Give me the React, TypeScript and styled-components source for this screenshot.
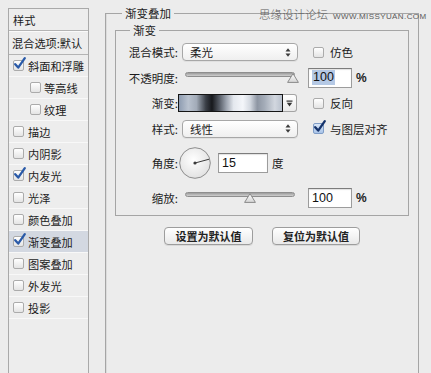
import React from "react";
import styled, { createGlobalStyle } from "styled-components";

const GlobalStyle = createGlobalStyle`
  html, body { margin: 0; padding: 0; background: #ececec; overflow: hidden; }
  body {
    font-family: "Noto Sans CJK SC", "Noto Sans", sans-serif;
    font-size: 11.5px;
    color: #1c1c1c;
  }
  * { box-sizing: border-box; }
`;

const Page = styled.div`
  position: relative;
  display: flex;
  align-items: flex-start;
  padding-left: 8px;
  height: 373px;
  overflow: hidden;
`;

/* ---------- left style list ---------- */
const SidePanel = styled.div`
  flex: none;
  width: 81px;
  height: 400px;
  margin-top: 8px;
  border: 1px solid #a9a9a9;
  background: #ededed;
  display: flex;
  flex-direction: column;
  font-size: 11.2px;
`;

const SideHeader = styled.div`
  height: 22px;
  padding-left: 4px;
  display: flex;
  align-items: center;
  border-bottom: 1px solid #b4b4b4;
`;

const SideDefault = styled.div`
  height: 24px;
  padding-left: 3px;
  display: flex;
  align-items: center;
  border-top: 1px solid #fafafa;
  border-bottom: 1px solid #b4b4b4;
  white-space: nowrap;
`;

const SideItem = styled.div<{ $level: number; $selected?: boolean }>`
  height: 22px;
  display: flex;
  align-items: center;
  gap: ${(p) => (p.$level ? 3 : 4)}px;
  padding-left: ${(p) => (p.$level ? 21 : 4)}px;
  border-bottom: 1px solid #f8f8f8;
  background: ${(p) => (p.$selected ? "#d3d8e1" : "transparent")};
  white-space: nowrap;
`;

/* ---------- checkbox ---------- */
const Box = styled.span<{ $tint?: boolean }>`
  position: relative;
  flex: none;
  display: inline-block;
  width: 11px;
  height: 11px;
  border-radius: 2px;
  border: 1px solid ${(p) => (p.$tint ? "#7f9cc6" : "#ababab")};
  background: ${(p) =>
    p.$tint
      ? "linear-gradient(#d8e5f6, #a9c4e9)"
      : "linear-gradient(#ffffff, #e4e4e4)"};
`;

const Tick = styled.svg`
  position: absolute;
  left: -1px;
  top: -4px;
  width: 13px;
  height: 13px;
  overflow: visible;
`;

function CheckBox({ on, tint, color }: { on?: boolean; tint?: boolean; color?: string }) {
  return (
    <Box $tint={tint}>
      {on && (
        <Tick viewBox="0 0 13 13">
          <path
            d="M2.2 7.2 L5.2 10.6 L11.8 1.2"
            fill="none"
            stroke={color || "#2a5aa8"}
            strokeWidth="2.3"
            strokeLinecap="round"
            strokeLinejoin="round"
          />
        </Tick>
      )}
    </Box>
  );
}

/* ---------- right side ---------- */
const Group = styled.fieldset<{ $mt: number; $h?: number; $w?: number }>`
  margin: ${(p) => p.$mt}px 0 0 0;
  padding: 0;
  min-width: 0;
  border: 1px solid #a5a5a5;
  ${(p) => (p.$h ? `height: ${p.$h}px;` : "")}
  ${(p) => (p.$w ? `width: ${p.$w}px;` : "")}
`;

const Caption = styled.legend<{ $ml: number }>`
  margin-left: ${(p) => p.$ml}px;
  padding: 0 3px;
  line-height: 14px;
  font-size: 11.5px;
`;

const Outer = styled(Group)`
  flex: none;
  margin-left: 16px;
  box-shadow: inset 5px 0 0 -4px #dcdcdc;
`;

const OuterBody = styled.div`
  padding: 0 9px;
`;

const InnerBody = styled.div`
  padding: 5px 0 7px 0;
  display: flex;
  flex-direction: column;
`;

const Row = styled.div<{ $h: number; $mt: number }>`
  display: flex;
  align-items: center;
  height: ${(p) => p.$h}px;
  margin-top: ${(p) => p.$mt}px;
`;

const Label = styled.div`
  flex: none;
  width: 64px;
  padding-right: 2px;
  text-align: right;
  white-space: nowrap;
`;

const Control = styled.div`
  flex: none;
  width: 118px;
  display: flex;
  align-items: center;
`;

const Extra = styled.div`
  margin-left: 10px;
  display: flex;
  align-items: center;
  white-space: nowrap;
`;

const CheckLabel = styled.label`
  display: flex;
  align-items: center;
  gap: 6px;
  margin-left: 5px;
`;

const Select = styled.div`
  width: 116px;
  margin-left: 2px;
  height: 18px;
  border: 1px solid #a7a7a7;
  border-radius: 4px;
  background: linear-gradient(#ffffff, #efefef);
  box-shadow: 0 1px 0 rgba(0, 0, 0, 0.05);
  display: flex;
  align-items: center;
  justify-content: space-between;
  padding: 0 6px 0 7px;
`;

const Spinner = () => (
  <svg width="6" height="11" viewBox="0 0 6 11">
    <path d="M0.5 4.5 L3 1.2 L5.5 4.5 Z" fill="#3a3a3a" />
    <path d="M0.5 6.5 L3 9.8 L5.5 6.5 Z" fill="#3a3a3a" />
  </svg>
);

const NumInput = styled.div<{ $w: number }>`
  width: ${(p) => p.$w}px;
  height: 20px;
  border: 1px solid #9c9c9c;
  border-top-color: #7c7c7c;
  background: #ffffff;
  box-shadow: inset 0 1px 1px rgba(0, 0, 0, 0.12);
  display: flex;
  align-items: center;
  padding-left: 3px;
  font-family: "Liberation Sans", Arial, sans-serif;
  font-size: 12.5px;
  color: #111;
`;

const Selected = styled.span`
  background: #b5c9e5;
  line-height: 15px;
  padding: 0 1px;
`;

const Unit = styled.span<{ $bold?: boolean }>`
  margin-left: 4px;
  ${(p) =>
    p.$bold
      ? `font-family: "Liberation Sans", Arial, sans-serif; font-weight: bold; font-size: 12px;`
      : ""}
`;

const SliderWrap = styled.div`
  position: relative;
  width: 110px;
  height: 14px;
  margin-left: 5px;
`;

const Track = styled.div`
  margin-top: 1px;
  height: 5px;
  border-radius: 3px;
  border: 1px solid #8e8e8e;
  background: linear-gradient(#9c9c9c, #cfcfcf);
`;

const Thumb = styled.svg`
  position: absolute;
  top: 2.5px;
  width: 12px;
  height: 10px;
`;

function Slider({ fraction }: { fraction: number }) {
  const center = 4 + 104 * fraction;
  return (
    <SliderWrap>
      <Track />
      <Thumb viewBox="0 0 12 10" style={{ left: center - 6 }}>
        <defs>
          <linearGradient id="thumbg" x1="0" y1="0" x2="0" y2="1">
            <stop offset="0" stopColor="#ffffff" />
            <stop offset="1" stopColor="#d4d4d4" />
          </linearGradient>
        </defs>
        <path
          d="M6 0.6 L11.4 9.4 L0.6 9.4 Z"
          fill="url(#thumbg)"
          stroke="#8a8a8a"
          strokeWidth="1"
          strokeLinejoin="round"
        />
      </Thumb>
    </SliderWrap>
  );
}

const GradientBar = styled.div`
  width: 105px;
  height: 18px;
  margin-left: -2px;
  border: 1px solid #151515;
  background: linear-gradient(
    90deg,
    #8e9cb1 0%,
    #b9c2cf 9%,
    #a2abb8 17%,
    #3a3f47 26%,
    #17191d 32%,
    #545a64 39%,
    #9ea5b0 46%,
    #e4e8ee 53%,
    #f4f6fa 62%,
    #d4d9e1 69%,
    #8e96a3 76%,
    #a4acb8 83%,
    #d2d7df 93%,
    #b9c1cd 100%
  );
`;

const GradDrop = styled.div`
  width: 14px;
  height: 18px;
  border: 1px solid #a4a4a4;
  border-left: none;
  border-radius: 0 3px 3px 0;
  background: linear-gradient(#ffffff, #eaeaea);
  display: flex;
  align-items: center;
  justify-content: center;
`;

const DialSvg = styled.svg`
  flex: none;
  width: 32px;
  height: 32px;
  margin-left: -1px;
`;

function Dial({ angle }: { angle: number }) {
  const r = (angle * Math.PI) / 180;
  const x = 16 + 14.5 * Math.cos(r);
  const y = 16 - 14.5 * Math.sin(r);
  return (
    <DialSvg viewBox="0 0 32 32">
      <defs>
        <radialGradient id="dialg" cx="0.45" cy="0.4" r="0.6">
          <stop offset="0" stopColor="#ffffff" />
          <stop offset="1" stopColor="#e2e2e2" />
        </radialGradient>
      </defs>
      <circle cx="16" cy="16" r="15.3" fill="url(#dialg)" stroke="#8c8c8c" strokeWidth="1" />
      <line x1="16" y1="16" x2={x} y2={y} stroke="#3a3a3a" strokeWidth="1" />
      <circle cx="16" cy="16" r="1.6" fill="#3a3a3a" />
    </DialSvg>
  );
}

const AngleInput = styled(NumInput)`
  margin-left: 7px;
`;

const ButtonRow = styled.div`
  display: flex;
  justify-content: center;
  gap: 19px;
  margin-top: 11px;
`;

const Button = styled.div<{ $w: number }>`
  width: ${(p) => p.$w}px;
  height: 18px;
  border: 1px solid #9d9d9d;
  border-radius: 4px;
  background: linear-gradient(#ffffff, #e9e9e9);
  box-shadow: 0 1px 0 rgba(0, 0, 0, 0.08);
  display: flex;
  align-items: center;
  justify-content: center;
  font-size: 11px;
  font-weight: bold;
  color: #222;
`;

const Watermark = styled.div`
  position: absolute;
  left: 259px;
  top: 6px;
  display: flex;
  align-items: baseline;
  gap: 5px;
  color: #5a5a5a;
  white-space: nowrap;
`;

const WmCn = styled.span`
  font-size: 11.5px;
  font-weight: 300;
`;

const WmEn = styled.span`
  font-family: "Liberation Sans", Arial, sans-serif;
  font-size: 8px;
  letter-spacing: 0.4px;
`;

const styleItems: { name: string; level: number; on?: boolean; selected?: boolean }[] = [
  { name: "斜面和浮雕", level: 0, on: true },
  { name: "等高线", level: 1 },
  { name: "纹理", level: 1 },
  { name: "描边", level: 0 },
  { name: "内阴影", level: 0 },
  { name: "内发光", level: 0, on: true },
  { name: "光泽", level: 0 },
  { name: "颜色叠加", level: 0 },
  { name: "渐变叠加", level: 0, on: true, selected: true },
  { name: "图案叠加", level: 0 },
  { name: "外发光", level: 0 },
  { name: "投影", level: 0 },
];

export default function App() {
  return (
    <>
      <GlobalStyle />
      <Page>
        <SidePanel>
          <SideHeader>样式</SideHeader>
          <SideDefault>混合选项:默认</SideDefault>
          {styleItems.map((it) => (
            <SideItem key={it.name} $level={it.level} $selected={it.selected}>
              <CheckBox on={it.on} />
              <span>{it.name}</span>
            </SideItem>
          ))}
        </SidePanel>

        <Outer as="fieldset" $mt={6} $h={400} $w={314}>
          <Caption $ml={16}>渐变叠加</Caption>
          <OuterBody>
            <Group $mt={3}>
              <Caption $ml={14}>渐变</Caption>
              <InnerBody>
                <Row $h={20} $mt={0}>
                  <Label>混合模式:</Label>
                  <Control>
                    <Select>
                      <span>柔光</span>
                      <Spinner />
                    </Select>
                  </Control>
                  <Extra>
                    <CheckLabel>
                      <CheckBox />
                      <span>仿色</span>
                    </CheckLabel>
                  </Extra>
                </Row>

                <Row $h={21} $mt={5}>
                  <Label>不透明度:</Label>
                  <Control>
                    <Slider fraction={1} />
                  </Control>
                  <Extra>
                    <NumInput $w={44}>
                      <Selected>100</Selected>
                    </NumInput>
                    <Unit $bold>%</Unit>
                  </Extra>
                </Row>

                <Row $h={20} $mt={5}>
                  <Label>渐变:</Label>
                  <Control>
                    <GradientBar />
                    <GradDrop>
                      <svg width="7" height="7" viewBox="0 0 7 7">
                        <rect x="0.5" y="0.5" width="6" height="1.2" fill="#333" />
                        <path d="M0.8 2.8 L6.2 2.8 L3.5 6.4 Z" fill="#333" />
                      </svg>
                    </GradDrop>
                  </Control>
                  <Extra>
                    <CheckLabel>
                      <CheckBox />
                      <span>反向</span>
                    </CheckLabel>
                  </Extra>
                </Row>

                <Row $h={21} $mt={5}>
                  <Label>样式:</Label>
                  <Control>
                    <Select>
                      <span>线性</span>
                      <Spinner />
                    </Select>
                  </Control>
                  <Extra>
                    <CheckLabel>
                      <CheckBox on tint color="#16336b" />
                      <span>与图层对齐</span>
                    </CheckLabel>
                  </Extra>
                </Row>

                <Row $h={34} $mt={7}>
                  <Label>角度:</Label>
                  <Control>
                    <Dial angle={15} />
                    <AngleInput $w={50}>15</AngleInput>
                    <Unit>度</Unit>
                  </Control>
                </Row>

                <Row $h={21} $mt={7}>
                  <Label>缩放:</Label>
                  <Control>
                    <Slider fraction={0.59} />
                  </Control>
                  <Extra>
                    <NumInput $w={44}>100</NumInput>
                    <Unit $bold>%</Unit>
                  </Extra>
                </Row>
              </InnerBody>
            </Group>

            <ButtonRow>
              <Button $w={89}>设置为默认值</Button>
              <Button $w={88}>复位为默认值</Button>
            </ButtonRow>
          </OuterBody>
        </Outer>

        <Watermark>
          <WmCn>思缘设计论坛</WmCn>
          <WmEn>WWW.MISSYUAN.COM</WmEn>
        </Watermark>
      </Page>
    </>
  );
}
